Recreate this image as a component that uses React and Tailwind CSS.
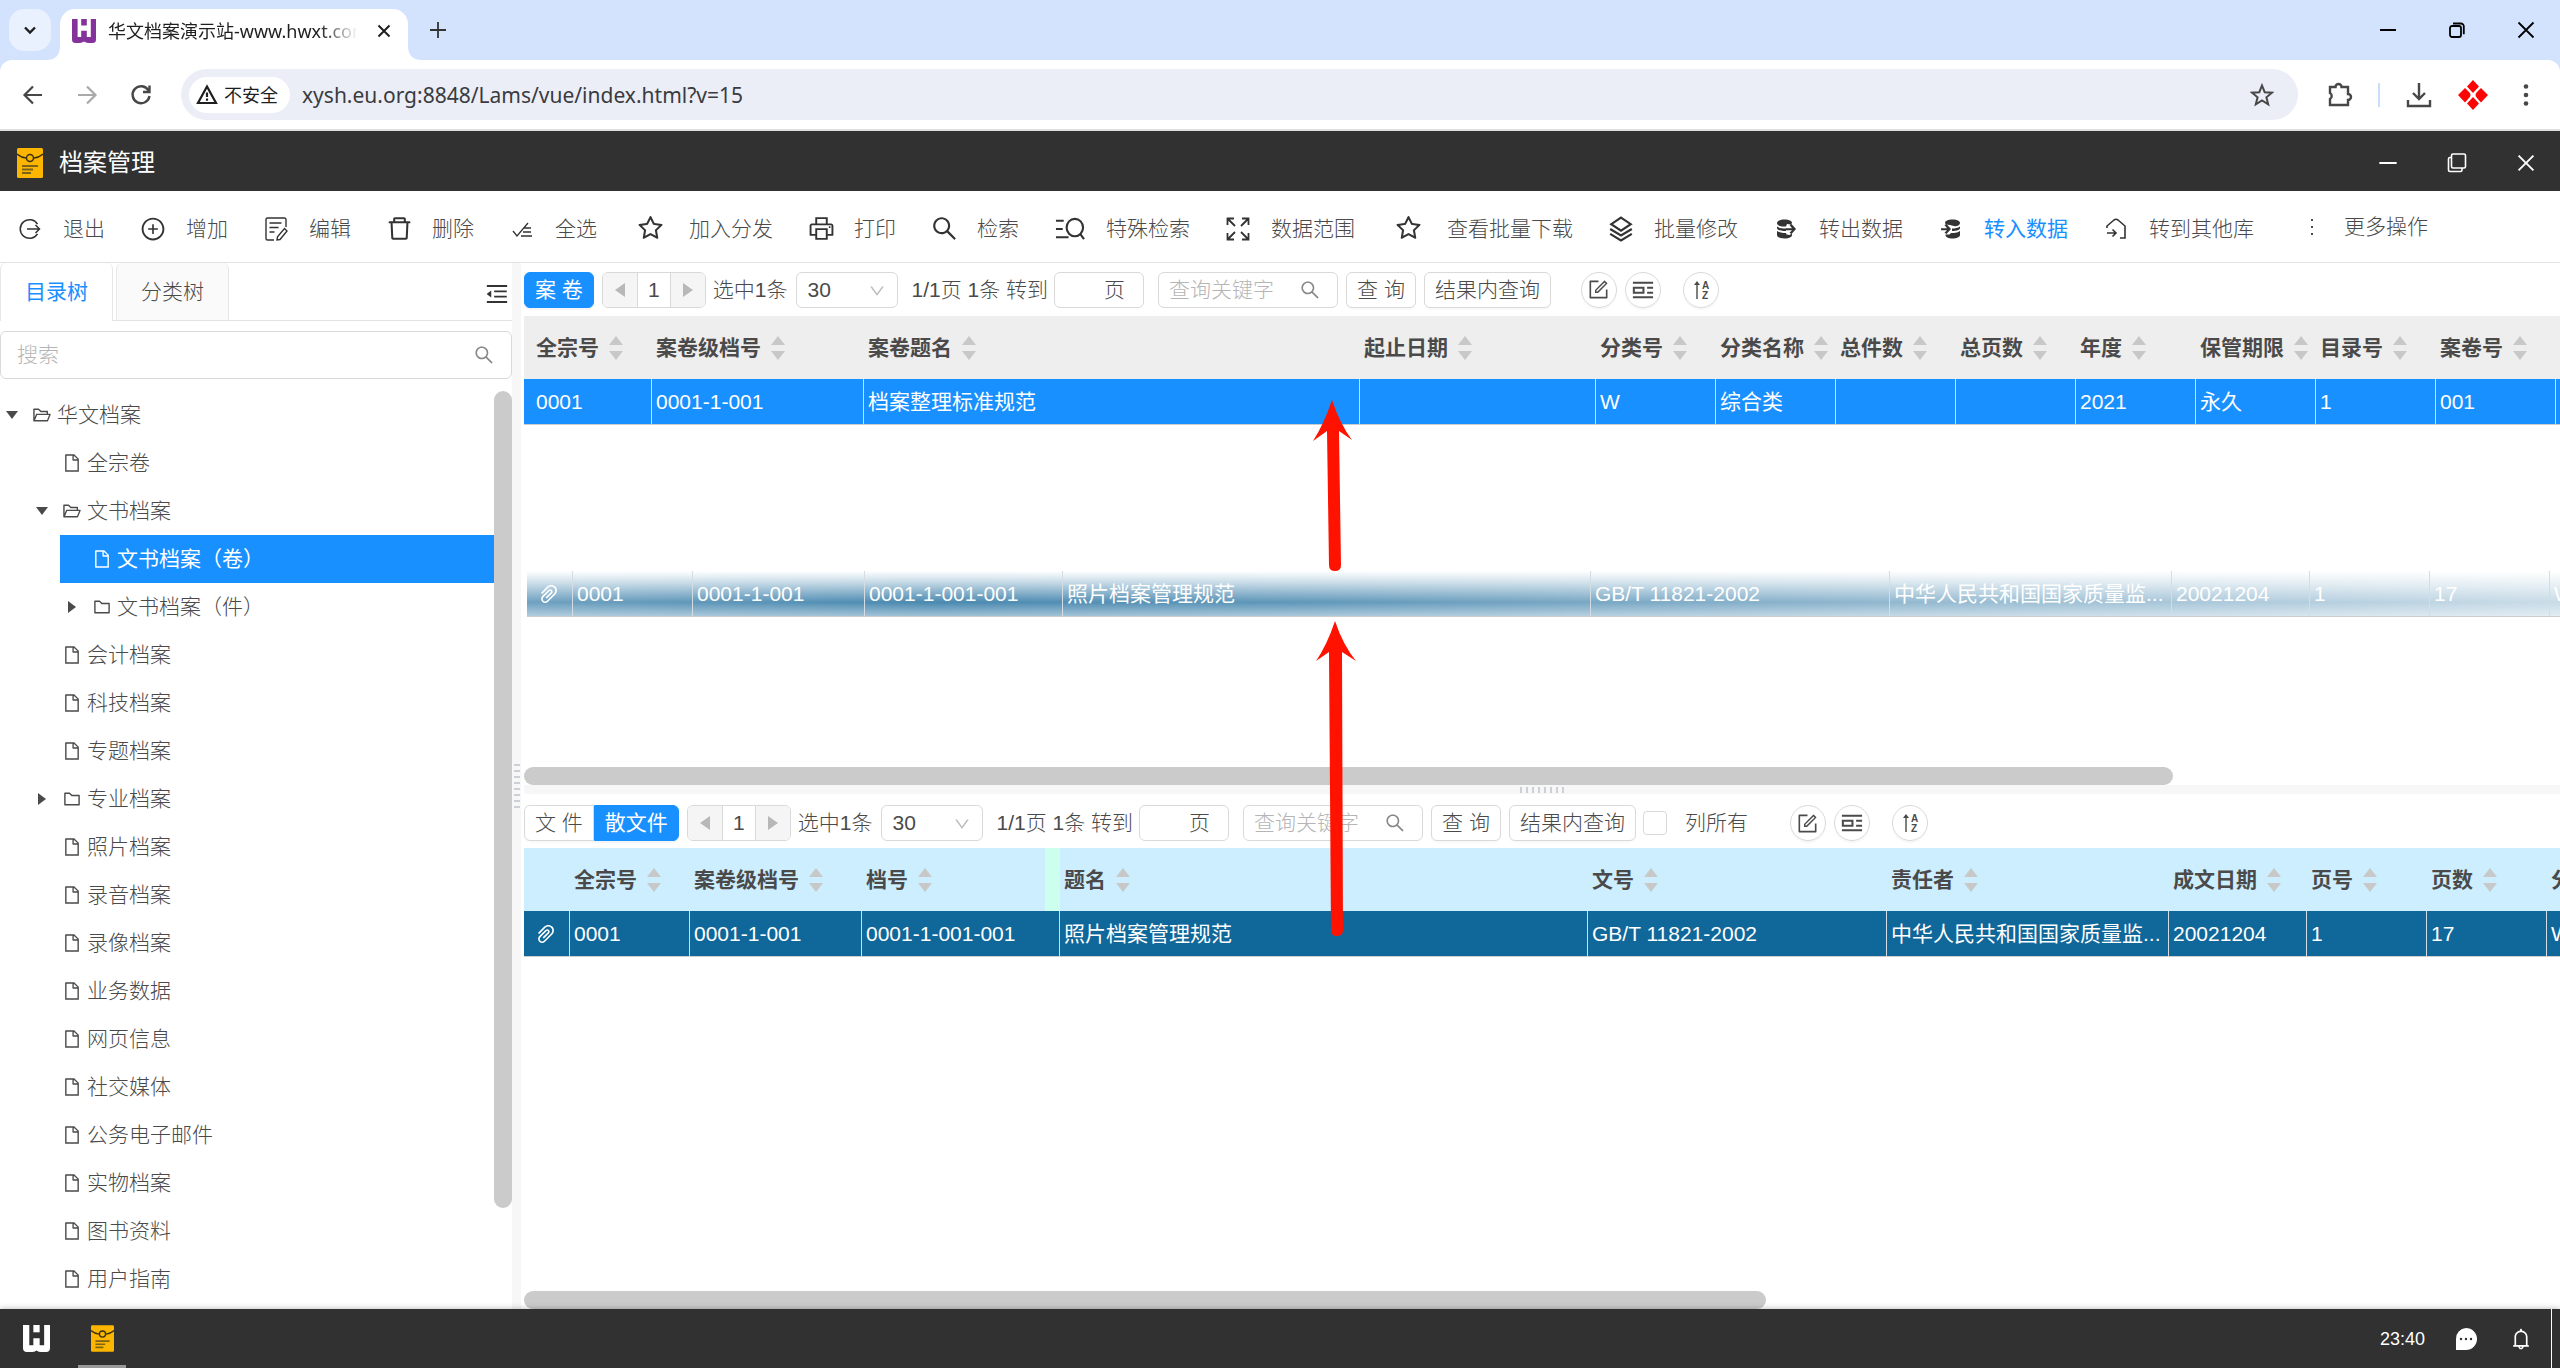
import { useState } from "react";
import {
  AiOutlineBell,
  AiOutlineClose,
  AiOutlineDelete,
  AiOutlineDown,
  AiOutlineFile,
  AiOutlineFolder,
  AiOutlineFolderOpen,
  AiOutlineForm,
  AiOutlineMenuFold,
  AiOutlineMinus,
  AiOutlinePaperClip,
  AiOutlinePlusCircle,
  AiOutlinePrinter,
  AiOutlineSearch,
  AiOutlineStar,
} from "react-icons/ai";

// ---------- icons ----------

function Svg({ children, className = "size-6", box = "0 0 24 24", stroke = "1.6" }) {
  return (
    <svg
      viewBox={box}
      className={className}
      fill="none"
      stroke="currentColor"
      strokeWidth={stroke}
      aria-hidden="true"
    >
      {children}
    </svg>
  );
}

const ExitIcon = () => (
  <Svg stroke="1.5">
    <path d="M19.5 7.2A9.3 9.3 0 1 0 19.5 16.8M9 12h12.5M17.5 8l4 4-4 4" />
  </Svg>
);

const EditDocIcon = () => (
  <Svg stroke="1.4">
    <path d="M22 10V2.5a1.5 1.5 0 0 0-1.5-1.5h-17A1.5 1.5 0 0 0 2 2.5v19A1.5 1.5 0 0 0 3.5 23H10M5.5 6h12M5.5 10.5h9M5.5 15h5" />
    <path d="M20.5 11.5l2.5 2.5-7 8.5-3 .5.5-3.2z" />
  </Svg>
);

const CheckAllIcon = () => (
  <Svg stroke="1.3">
    <path d="M3 14l4 5L18 6M14 11h7M13 15h8M11 19h11" />
  </Svg>
);

const AdvancedSearchIcon = () => (
  <Svg className="h-6 w-[30px]" box="0 0 31 24" stroke="2.2">
    <ellipse cx="20.5" cy="10.5" rx="8.5" ry="9" />
    <path d="M26 17l4 5.5M1 3.5h8M1 12h7M1 20.5h13" />
  </Svg>
);

const RangeIcon = () => (
  <Svg stroke="1.8">
    <path d="M1.5 8V1.5H8M16 1.5h6.5V8M22.5 16v6.5H16M8 22.5H1.5V16M2 2l7 7M22 2l-7 7M22 22l-7-7M2 22l7-7" />
  </Svg>
);

const LayersIcon = () => (
  <Svg className="size-[26px] shrink-0" stroke="2">
    <path d="M12 1.5L21 7.5 12 13.5 3 7.5zM2 12L12 18l10-6M2 16.5L12 22.5l10-6" />
  </Svg>
);

const DataOutIcon = () => (
  <svg viewBox="0 0 24 24" className="size-6" fill="currentColor" aria-hidden="true">
    <path d="M3 6c0-2 3-3.5 7.5-3.5S18 4 18 6l-1 1.5-4-.5-1 2.5H8C5 9 3 8 3 6zM3 9.5c2 1.5 5 2 9 2v2.5c-5 0-9-1-9-3zM3 14c3 2 6 2 9 2l.5 1.5 3 .5 2.5-1.5V18c0 2-3 3.5-7.5 3.5S3 20 3 18z" />
    <path d="M12 11.2h6L15.5 8l2-1L22 12l-4.5 5-2-1.2 2.5-2.6h-6z" />
  </svg>
);

const DataInIcon = () => (
  <svg viewBox="0 0 24 24" className="size-6" fill="currentColor" aria-hidden="true">
    <path d="M6 6c0-2 3-3.5 7.5-3.5S21 4 21 6s-2 3-5 3.2L11 8 7 7.5zM21 9.5c-2 1.5-5 2-8 2V14c5 0 8-1 8-3zM21 14c-3 2-6 2-9 2l-1.5 1.5H6.5V18c0 2 3 3.5 7 3.5S21 20 21 18z" />
    <path d="M2 11.2h6L5.5 8l2-1L12 12l-4.5 5-2-1.2L8 13.2H2z" />
  </svg>
);

const ToOtherIcon = () => (
  <Svg stroke="1.6">
    <path d="M3 11V9l7-6Q12 1.5 14 3l7 6v12h-5M3 16h9M8.5 12.5l3.5 3.5-3.5 3.5" />
  </Svg>
);

const MoreIcon = () => (
  <svg viewBox="0 0 24 24" className="size-6" fill="currentColor" aria-hidden="true">
    <rect x="11" y="4" width="2" height="2" />
    <rect x="11" y="11" width="2" height="2" />
    <rect x="11" y="18" width="2" height="2" />
  </svg>
);

const ColumnsIcon = () => (
  <Svg className="size-[22px]" stroke="2.2">
    <path d="M1 4h22M1 20h22M2 9.5h10.5v5.5H2zM16.5 9.5H23M16.5 15H23" />
  </Svg>
);

const SortAzIcon = () => (
  <svg viewBox="0 0 20 20" className="size-5" fill="currentColor" aria-hidden="true">
    <path d="M5.3 19V5H3l3-4 3 4H6.7v14z" />
    <text x="11" y="9" fontSize="10" fontWeight="700">A</text>
    <text x="11" y="19" fontSize="10" fontWeight="700">Z</text>
  </svg>
);

const RestoreIcon = () => (
  <Svg className="size-5" box="0 0 20 20" stroke="1.6">
    <rect x="4.5" y="1" width="14" height="14" rx="1.5" />
    <path d="M4.5 4.5H3A1.5 1.5 0 0 0 1.5 6v11A1.5 1.5 0 0 0 3 18.5h10.5A1.5 1.5 0 0 0 15 17v-2" />
  </Svg>
);

const Logo = ({ className }) => (
  <svg viewBox="0 0 24 24" className={className} fill="currentColor" aria-hidden="true">
    <path d="M0 0h5.600v18h3.600v-6.300h5.600V18h4V0H24v20.500Q24 24 20.500 24h-4.500Q14 24 12 22.600 10 24 8 24H3.500Q0 24 0 20.500z" />
    <path d="M9.2 0h5.6v6.5H9.2z" />
  </svg>
);

const ArchiveIcon = ({ className }) => (
  <svg viewBox="0 0 26 30" className={className} aria-hidden="true">
    <rect width="26" height="30" rx="1.5" fill="#fdb600" />
    <g fill="none" stroke="#3b3212" strokeWidth="1.5">
      <path d="M0 6q4 3.5 9 4M26 6q-4 3.5-9 4" />
      <circle cx="13" cy="10" r="3.5" />
    </g>
    <path d="M5 18h16M5 21.5h11M5 25h9" stroke="#7d621a" strokeWidth="1.8" />
  </svg>
);

const Sorter = () => (
  <svg viewBox="0 0 14 24" className="h-6 w-[14px] shrink-0" fill="#c8c8c8" aria-hidden="true">
    <path d="M7 0l7 9H0zM7 24l7-9H0z" />
  </svg>
);

// ---------- data ----------

const actions = [
  { label: "退出", icon: <ExitIcon /> },
  { label: "增加", icon: <AiOutlinePlusCircle className="size-[26px] shrink-0" /> },
  { label: "编辑", icon: <EditDocIcon /> },
  { label: "删除", icon: <AiOutlineDelete className="size-[29px] shrink-0" /> },
  { label: "全选", icon: <CheckAllIcon /> },
  { label: "加入分发", icon: <AiOutlineStar className="size-[29px] shrink-0" />, box: "w-[35px]" },
  { label: "打印", icon: <AiOutlinePrinter className="size-[29px] shrink-0" /> },
  { label: "检索", icon: <AiOutlineSearch className="size-[29px] shrink-0" /> },
  { label: "特殊检索", icon: <AdvancedSearchIcon />, box: "w-[30px]" },
  { label: "数据范围", icon: <RangeIcon /> },
  { label: "查看批量下载", icon: <AiOutlineStar className="size-[29px] shrink-0" />, box: "w-[35px]" },
  { label: "批量修改", icon: <LayersIcon /> },
  { label: "转出数据", icon: <DataOutIcon /> },
  { label: "转入数据", icon: <DataInIcon />, active: true },
  { label: "转到其他库", icon: <ToOtherIcon /> },
];

const tree = [
  { label: "华文档案", level: 0, type: "open" },
  { label: "全宗卷", level: 1, type: "file" },
  { label: "文书档案", level: 1, type: "open" },
  { label: "文书档案（卷）", level: 2, type: "file" },
  { label: "文书档案（件）", level: 2, type: "folder" },
  { label: "会计档案", level: 1, type: "file" },
  { label: "科技档案", level: 1, type: "file" },
  { label: "专题档案", level: 1, type: "file" },
  { label: "专业档案", level: 1, type: "folder" },
  { label: "照片档案", level: 1, type: "file" },
  { label: "录音档案", level: 1, type: "file" },
  { label: "录像档案", level: 1, type: "file" },
  { label: "业务数据", level: 1, type: "file" },
  { label: "网页信息", level: 1, type: "file" },
  { label: "社交媒体", level: 1, type: "file" },
  { label: "公务电子邮件", level: 1, type: "file" },
  { label: "实物档案", level: 1, type: "file" },
  { label: "图书资料", level: 1, type: "file" },
  { label: "用户指南", level: 1, type: "file" },
];

const indents = ["ml-0", "ml-[30px]", "ml-[60px]"];

const volumeColumns = [
  { title: "全宗号", width: "w-[128px]", value: "0001" },
  { title: "案卷级档号", width: "w-[212px]", value: "0001-1-001" },
  { title: "案卷题名", width: "w-[496px]", value: "档案整理标准规范" },
  { title: "起止日期", width: "w-[236px]", value: "" },
  { title: "分类号", width: "w-[120px]", value: "W" },
  { title: "分类名称", width: "w-[120px]", value: "综合类" },
  { title: "总件数", width: "w-[120px]", value: "" },
  { title: "总页数", width: "w-[120px]", value: "" },
  { title: "年度", width: "w-[120px]", value: "2021" },
  { title: "保管期限", width: "w-[120px]", value: "永久" },
  { title: "目录号", width: "w-[120px]", value: "1" },
  { title: "案卷号", width: "w-[120px]", value: "001" },
  { title: "", width: "w-[120px]", value: "" },
];

const fileColumns = [
  { title: "", width: "w-[46px]", clip: true },
  { title: "全宗号", width: "w-[120px]", value: "0001" },
  { title: "案卷级档号", width: "w-[172px]", value: "0001-1-001" },
  { title: "档号", width: "w-[198px]", value: "0001-1-001-001", resize: true },
  { title: "题名", width: "w-[528px]", value: "照片档案管理规范" },
  { title: "文号", width: "w-[299px]", value: "GB/T 11821-2002" },
  { title: "责任者", width: "w-[282px]", value: "中华人民共和国国家质量监..." },
  { title: "成文日期", width: "w-[138px]", value: "20021204" },
  { title: "页号", width: "w-[120px]", value: "1" },
  { title: "页数", width: "w-[120px]", value: "17" },
  { title: "分类号", width: "w-[120px]", value: "W" },
];

// ---------- browser frame ----------

function BrowserBar() {
  return (
    <div className="shrink-0 bg-[#d3e3fd] font-['Noto_Sans','Noto_Sans_CJK_SC',sans-serif] font-normal">
      <div className="flex h-[60px] items-end pl-[9px]">
        <button aria-label="搜索标签页" className="mb-[9px] flex size-[42px] items-center justify-center rounded-[15px] bg-[#e9f1fe] text-[#1f1f1f]">
          <Svg className="size-4" box="0 0 16 16" stroke="2.4">
            <path d="M3 5.5l5 5 5-5" />
          </Svg>
        </button>
        <div className="relative ml-[9px] flex h-[51px] w-[348px] items-center rounded-t-[15px] bg-white pb-2 pl-3 text-[#1f1f1f]">
          <svg viewBox="0 0 14 14" className="absolute bottom-0 -left-[14px] size-[14px]" fill="#fff" aria-hidden="true">
            <path d="M14 0v14H0Q14 14 14 0z" />
          </svg>
          <svg viewBox="0 0 14 14" className="absolute -right-[14px] bottom-0 size-[14px]" fill="#fff" aria-hidden="true">
            <path d="M0 0v14h14Q0 14 0 0z" />
          </svg>
          <Logo className="size-6 shrink-0 text-[#83339a]" />
          <span className="ml-3 w-[250px] overflow-hidden text-lg whitespace-nowrap [mask-image:linear-gradient(to_right,#000_85%,transparent)]">
            华文档案演示站-www.hwxt.com
          </span>
          <button aria-label="关闭标签页" className="ml-4 flex size-5 items-center justify-center">
            <Svg className="size-4" box="0 0 16 16" stroke="2">
              <path d="M2.5 2.5l11 11M13.5 2.5l-11 11" />
            </Svg>
          </button>
        </div>
        <button aria-label="新标签页" className="mb-5 ml-5 flex size-5 items-center justify-center text-[#333]">
          <Svg className="size-4" box="0 0 16 16" stroke="1.8">
            <path d="M8 0v16M0 8h16" />
          </Svg>
        </button>
        <div className="mr-6 mb-5 ml-auto flex items-center gap-[49px] text-black">
          <button aria-label="最小化" className="flex size-5 items-center justify-center">
            <span className="h-[2px] w-4 bg-black" />
          </button>
          <button aria-label="还原">
            <Svg className="size-5" box="0 0 20 20" stroke="1.8">
              <rect x="3" y="6" width="11" height="11" rx="2" />
              <path d="M6 3.5h8A2.8 2.8 0 0 1 16.8 6.3v8" />
            </Svg>
          </button>
          <button aria-label="关闭">
            <Svg className="size-5" box="0 0 20 20" stroke="1.8">
              <path d="M2.5 2.5l15 15M17.5 2.5l-15 15" />
            </Svg>
          </button>
        </div>
      </div>

      <div className="flex h-[71px] items-center rounded-t-xl border-b-2 border-[#dedfe0] bg-white pr-[22px] pl-[21px] text-[#474747]">
        <button aria-label="后退" className="size-6">
          <Svg stroke="2.2">
            <path d="M21 12H4M12 3.5L3.5 12l8.5 8.5" />
          </Svg>
        </button>
        <button aria-label="前进" className="ml-[30px] size-6 text-[#a9a9a9]">
          <Svg stroke="2.2">
            <path d="M3 12h17M12 3.5l8.5 8.5-8.5 8.5" />
          </Svg>
        </button>
        <button aria-label="刷新" className="ml-[30px] size-6">
          <Svg stroke="2.4">
            <path d="M19.5 7.5A8.5 8.5 0 1 0 20.5 13M20.5 2.5V9H14" />
          </Svg>
        </button>
        <div className="ml-7 flex h-[51px] min-w-0 flex-1 items-center rounded-full bg-[#ebeef7] pr-6 pl-2">
          <button className="flex h-9 w-[101px] shrink-0 items-center gap-[6px] rounded-full bg-white pl-[7px] text-lg text-[#1f1f1f]">
            <Svg className="size-[22px] shrink-0" box="0 0 22 22" stroke="2.2">
              <path d="M11 2.5L20 19H2zM11 8.5V13M11 14.5v2.2" />
            </Svg>
            不安全
          </button>
          <input
            aria-label="地址栏"
            readOnly
            value="xysh.eu.org:8848/Lams/vue/index.html?v=15"
            className="ml-3 min-w-0 flex-1 bg-transparent text-[21px] text-[#3a3b3f] outline-none"
          />
          <button aria-label="收藏" className="size-6">
            <Svg stroke="2">
              <path d="M12 2.5l2.7 6.7 7.3.5-5.6 4.6 1.8 7L12 17.5l-6.2 3.8 1.8-7L2 9.7l7.3-.5z" />
            </Svg>
          </button>
        </div>
        <button aria-label="扩展程序" className="ml-7 size-7">
          <Svg className="size-7" box="0 0 28 28" stroke="2.4">
            <path d="M4 6h5.5a3 3 0 0 1 6 0H22v7a3 3 0 0 1 0 6v5H4v-6a3.5 3.5 0 0 0 0-6z" />
          </Svg>
        </button>
        <span className="ml-6 h-6 w-[2px] bg-[#c7ddfb]" />
        <button aria-label="下载" className="ml-[26px] size-[26px]">
          <Svg className="size-[26px]" box="0 0 26 26" stroke="2.4">
            <path d="M13 1v16M7 11l6 6 6-6M2 18v6h22v-6" />
          </Svg>
        </button>
        <button aria-label="扩展" className="ml-[26px] size-[30px]">
          <svg viewBox="0 0 30 30" className="size-[30px]" fill="#fb0505" aria-hidden="true">
            <path d="M15 0l6 6.500-6 6.500-6-6.500zM7 8l4 4q3 3 0 6l-4 4.500L0 15zM23 8l7 7-7 7.500-4-4.500q-3-3 0-6zM15 17l6 6.500-6 6.500-6-6.500z" />
          </svg>
        </button>
        <button aria-label="更多" className="ml-[26px] size-6">
          <svg viewBox="0 0 24 24" className="size-6" fill="currentColor" aria-hidden="true">
            <circle cx="12" cy="3.5" r="2.3" />
            <circle cx="12" cy="12" r="2.3" />
            <circle cx="12" cy="20.5" r="2.3" />
          </svg>
        </button>
      </div>
    </div>
  );
}

// ---------- app ----------

function TitleBar() {
  return (
    <header className="flex h-[60px] shrink-0 items-center bg-[#313131] pt-1 pr-[22px] pl-[17px] text-white">
      <ArchiveIcon className="h-[30px] w-[26px]" />
      <h1 className="ml-4 text-2xl font-normal">档案管理</h1>
      <div className="ml-auto flex items-center gap-[45px]">
        <button aria-label="最小化"><AiOutlineMinus className="size-6" /></button>
        <button aria-label="还原" className="flex size-6 items-center justify-center"><RestoreIcon /></button>
        <button aria-label="关闭"><AiOutlineClose className="size-6" /></button>
      </div>
    </header>
  );
}

function ActionBar() {
  return (
    <nav className="flex h-[72px] shrink-0 items-center border-b border-[#e3e3e3] pt-1">
      {actions.map((item) => (
        <button
          key={item.label}
          className={`flex shrink-0 items-center gap-[21px] px-[18px] ${item.active ? "font-normal text-[#1890ff]" : ""}`}
        >
          <span className={`flex shrink-0 items-center justify-center text-[#333] ${item.box || "w-6"}`}>
            {item.icon}
          </span>
          {item.label}
        </button>
      ))}
      <button className="ml-[10px] flex shrink-0 items-center gap-5 px-[18px] pb-1">
        <MoreIcon />
        更多操作
      </button>
    </nav>
  );
}

function TreeRow({ node, selected, onSelect }) {
  const Icon =
    node.type === "file" ? AiOutlineFile : node.type === "open" ? AiOutlineFolderOpen : AiOutlineFolder;

  return (
    <li className={indents[node.level]}>
      <button
        onClick={onSelect}
        className={`flex h-12 w-full items-center text-left ${selected ? "bg-[#1890ff] font-normal text-white" : ""}`}
      >
        <span className="flex w-6 justify-center">
          {node.type !== "file" && (
            <svg viewBox="0 0 12 12" className="size-3" fill="currentColor" aria-hidden="true">
              {node.type === "open" ? <path d="M0 2h12L6 10z" /> : <path d="M2 0v12l8-6z" />}
            </svg>
          )}
        </span>
        <span className="ml-[6px] flex w-6 justify-center">
          <Icon className="size-5" />
        </span>
        <span className="ml-[3px]">{node.label}</span>
      </button>
    </li>
  );
}

function Sidebar() {
  const [selected, setSelected] = useState("文书档案（卷）");

  return (
    <aside className="flex w-[512px] shrink-0 flex-col">
      <div className="flex h-[58px] shrink-0 items-stretch border-b border-[#e3e3e3]">
        <button className="-mb-px w-[113px] rounded-t-md border-x border-[#e8e8e8] bg-white font-normal text-[#1890ff]">
          目录树
        </button>
        <button className="ml-[3px] w-[113px] rounded-t-md border-x border-[#e8e8e8] bg-[#fafafa]">
          分类树
        </button>
        <button aria-label="收起" className="mr-[2px] ml-auto pt-1 text-[#333]">
          <AiOutlineMenuFold className="size-[26px]" />
        </button>
      </div>

      <label className="mt-[10px] flex h-12 shrink-0 items-center rounded-md border border-[#d9d9d9] pr-4 pl-4">
        <input aria-label="搜索" placeholder="搜索" className="min-w-0 flex-1 outline-none placeholder:text-[#b5b5b5]" />
        <AiOutlineSearch className="size-[22px] text-[#888]" />
      </label>

      <div className="mt-3 flex min-h-0 flex-1">
        <ul className="flex-1 overflow-hidden">
          {tree.map((node) => (
            <TreeRow
              key={node.label}
              node={node}
              selected={selected === node.label}
              onSelect={() => setSelected(node.label)}
            />
          ))}
        </ul>
        <div className="w-[18px]">
          <div className="h-[89%] rounded-full bg-[#cbcbcb]" />
        </div>
      </div>
    </aside>
  );
}

const buttonClass =
  "h-9 shrink-0 border border-[#d9d9d9] bg-white px-[10px] shadow-[0_2px_0_rgba(0,0,0,0.02)]";
const primaryClass =
  "h-9 shrink-0 border border-[#1890ff] bg-[#1890ff] px-[10px] font-normal text-white shadow-[0_2px_0_rgba(0,0,0,0.04)]";
const circleClass =
  "flex size-9 shrink-0 items-center justify-center rounded-full border border-[#d9d9d9] shadow-[0_2px_0_rgba(0,0,0,0.03)]";

function QueryBar({ tabs, showAll }) {
  return (
    <div
      className={`flex shrink-0 items-center overflow-hidden whitespace-nowrap ${showAll ? "h-[54px] pt-1" : "h-[53px]"}`}
    >
      {tabs}
      <div className="ml-2 flex h-9 shrink-0 overflow-hidden rounded-md border border-[#d9d9d9]">
        <button aria-label="上一页" className="flex w-[34px] items-center justify-center bg-[#f5f5f5] text-[#b8b8b8]">
          <svg viewBox="0 0 10 14" className="h-[14px] w-[10px]" fill="currentColor" aria-hidden="true">
            <path d="M10 0v14L0 7z" />
          </svg>
        </button>
        <button className="w-[34px] border-x border-[#d9d9d9]">1</button>
        <button aria-label="下一页" className="flex w-[34px] items-center justify-center bg-[#f5f5f5] text-[#b8b8b8]">
          <svg viewBox="0 0 10 14" className="h-[14px] w-[10px]" fill="currentColor" aria-hidden="true">
            <path d="M0 0v14l10-7z" />
          </svg>
        </button>
      </div>
      <span className="ml-[7px]">选中1条</span>
      <span className="relative ml-2 shrink-0">
        <select aria-label="每页条数" className="block h-9 w-[102px] appearance-none rounded-md border border-[#d9d9d9] bg-white pl-[11px] outline-none">
          <option>30</option>
        </select>
        <AiOutlineDown className="pointer-events-none absolute top-[10px] right-3 size-[18px] text-[#bbb]" />
      </span>
      <span className="ml-[14px]">1/1页 1条 转到</span>
      <label className="ml-[6px] flex h-9 w-[90px] shrink-0 items-center rounded-md border border-[#d9d9d9] pr-[18px] pl-2">
        <input aria-label="转到页码" className="w-0 min-w-0 flex-1 outline-none" />
        页
      </label>
      <label className="ml-[14px] flex h-9 w-[180px] shrink-0 items-center rounded-md border border-[#d9d9d9] pr-4 pl-[10px]">
        <input aria-label="查询关键字" placeholder="查询关键字" className="w-0 min-w-0 flex-1 outline-none placeholder:text-[#b5b5b5]" />
        <AiOutlineSearch className="size-[22px] text-[#888]" />
      </label>
      <button className={`ml-2 rounded-md ${buttonClass}`}>查 询</button>
      <button className={`ml-2 rounded-md ${buttonClass}`}>结果内查询</button>
      {showAll && (
        <label className="ml-[7px] flex items-center gap-[18px]">
          <input type="checkbox" className="size-6 appearance-none rounded-sm border border-[#d9d9d9] bg-white" />
          列所有
        </label>
      )}
      <div className={`flex gap-2 ${showAll ? "ml-[42px]" : "ml-[30px]"}`}>
        <button aria-label="编辑" className={circleClass}>
          <AiOutlineForm className="size-[23px]" />
        </button>
        <button aria-label="列设置" className={circleClass}>
          <ColumnsIcon />
        </button>
      </div>
      <button aria-label="排序" className={`ml-[22px] ${circleClass}`}>
        <SortAzIcon />
      </button>
    </div>
  );
}

function DataRow({ columns, rowClass, first }) {
  return (
    <tr className={`h-[46px] font-normal text-white ${rowClass}`}>
      {columns.map((col, i) => (
        <td
          key={i}
          className={`overflow-hidden border-r border-b border-r-[#d4dde4] border-b-[#ccc] p-0 whitespace-nowrap ${i === 0 && first ? first : "pl-1"} ${col.width}`}
        >
          {col.clip ? <AiOutlinePaperClip className="ml-[6px] size-6" /> : col.value}
        </td>
      ))}
    </tr>
  );
}

function DataTable({ columns, headClass, rowClass, first }) {
  return (
    <table className="w-full table-fixed border-separate border-spacing-0 text-left">
      <thead>
        <tr className={`h-[63px] ${headClass}`}>
          {columns.map((col, i) => (
            <th key={i} className={`p-0 font-bold whitespace-nowrap ${i === 0 && first ? first : "pl-1"} ${col.width}`}>
              <div className="flex h-[63px] items-center gap-[10px]">
                {col.title}
                {col.title && <Sorter />}
                {col.resize && <span className="ml-auto h-full w-[15px] bg-[#ccffee]" />}
              </div>
            </th>
          ))}
        </tr>
      </thead>
      <tbody>
        <DataRow columns={columns} rowClass={rowClass} first={first} />
      </tbody>
    </table>
  );
}

// The row being dragged from the file list up to the volume list
function DragGhost() {
  return (
    <div className="pointer-events-none absolute top-[308px] right-0 left-[3px] overflow-hidden bg-[linear-gradient(to_right,rgba(255,255,255,0.2),transparent_20%,rgba(255,255,255,0.12)_38%,rgba(255,255,255,0.7)),linear-gradient(to_bottom,#fff,#c3d8e5_25%,#4a89b0_68%,#a5c5d8)]">
      <table className="w-full table-fixed border-separate border-spacing-0 text-left">
        <tbody>
          <DataRow columns={fileColumns} rowClass="" />
        </tbody>
      </table>
    </div>
  );
}

function DragArrows() {
  return (
    <svg
      viewBox="0 0 44 538"
      className="pointer-events-none absolute top-[137px] left-[792px] h-[538px] w-11"
      fill="#ff1200"
      aria-hidden="true"
    >
      <path d="M19 0Q27 24 39 40L26 31 28 165Q28 171 22 171T16 165L14 31 0 41Q11 24 19 0z" />
      <path d="M22 221Q30 245 43 261L29 252 30 530Q30 536 24 536T18 530L16 252 3 261Q14 245 22 221z" />
    </svg>
  );
}

function Grip({ vertical }) {
  return (
    <div className={`flex items-center justify-center gap-1 ${vertical ? "w-[9px] flex-col" : "h-[9px]"} shrink-0 bg-[#f7f7f7]`}>
      {[0, 1, 2, 3, 4, 5, 6, 7].map((n) => (
        <span key={n} className={`bg-[#cdd0d6] ${vertical ? "h-[2px] w-[6px]" : "h-[6px] w-[2px]"}`} />
      ))}
    </div>
  );
}

function Workspace() {
  return (
    <main className="relative flex min-w-0 flex-1 flex-col overflow-hidden pl-[3px]">
      <section className="relative flex min-h-0 flex-[522] flex-col">
        <QueryBar tabs={<button className={`rounded-md ${primaryClass}`}>案 卷</button>} />
        <div className="min-h-0 flex-1 overflow-hidden">
          <DataTable columns={volumeColumns} headClass="bg-[#eee]" rowClass="bg-[#1890ff]" first="pl-3" />
        </div>
        <div className="h-[18px] w-[81%] shrink-0 rounded-full bg-[#cbcbcb]" />
        <DragGhost />
      </section>

      <Grip />

      <section className="flex min-h-0 flex-[515] flex-col">
        <QueryBar
          showAll
          tabs={
            <div className="flex shrink-0">
              <button className={`rounded-l-md ${buttonClass}`}>文 件</button>
              <button className={`rounded-r-md ${primaryClass}`}>散文件</button>
            </div>
          }
        />
        <div className="min-h-0 flex-1 overflow-hidden">
          <DataTable columns={fileColumns} headClass="bg-[#cceeff]" rowClass="bg-[#10679a]" />
        </div>
        <div className="h-[18px] w-[61%] shrink-0 rounded-full bg-[#cbcbcb]" />
      </section>

      <DragArrows />
    </main>
  );
}

function TaskBar() {
  return (
    <footer className="relative flex h-[59px] shrink-0 items-stretch bg-[#313131] text-white shadow-[0_0_6px_rgba(0,0,0,0.3)]">
      <button aria-label="开始" className="ml-[23px] flex items-center">
        <Logo className="size-[27px]" />
      </button>
      <button aria-label="档案管理" className="ml-7 flex w-12 items-center justify-center border-b-[3px] border-[#999] pt-[3px]">
        <ArchiveIcon className="h-[27px] w-[23px]" />
      </button>
      <div className="ml-auto flex items-center">
        <time className="text-lg">23:40</time>
        <button aria-label="消息" className="ml-[30px]">
          <svg viewBox="0 0 22 22" className="size-[22px]" aria-hidden="true">
            <path d="M11 0a11 11 0 1 1 0 22H1V11A10.5 10.5 0 0 1 11 0z" fill="#fff" />
            <g fill="#313131">
              <circle cx="6" cy="11" r="1.2" />
              <circle cx="11" cy="11" r="1.2" />
              <circle cx="16" cy="11" r="1.2" />
            </g>
          </svg>
        </button>
        <button aria-label="通知" className="ml-8">
          <AiOutlineBell className="size-6" />
        </button>
        <span className="mr-2 ml-[18px] w-px self-stretch bg-white" />
      </div>
    </footer>
  );
}

export default function App() {
  return (
    <div className="flex h-screen flex-col overflow-hidden bg-white font-['Liberation_Sans','Noto_Sans_CJK_SC',sans-serif] text-[21px] leading-[30px] font-light text-[#4a4a4a]">
      <BrowserBar />
      <TitleBar />
      <ActionBar />
      <div className="flex min-h-0 flex-1">
        <Sidebar />
        <Grip vertical />
        <Workspace />
      </div>
      <TaskBar />
    </div>
  );
}
